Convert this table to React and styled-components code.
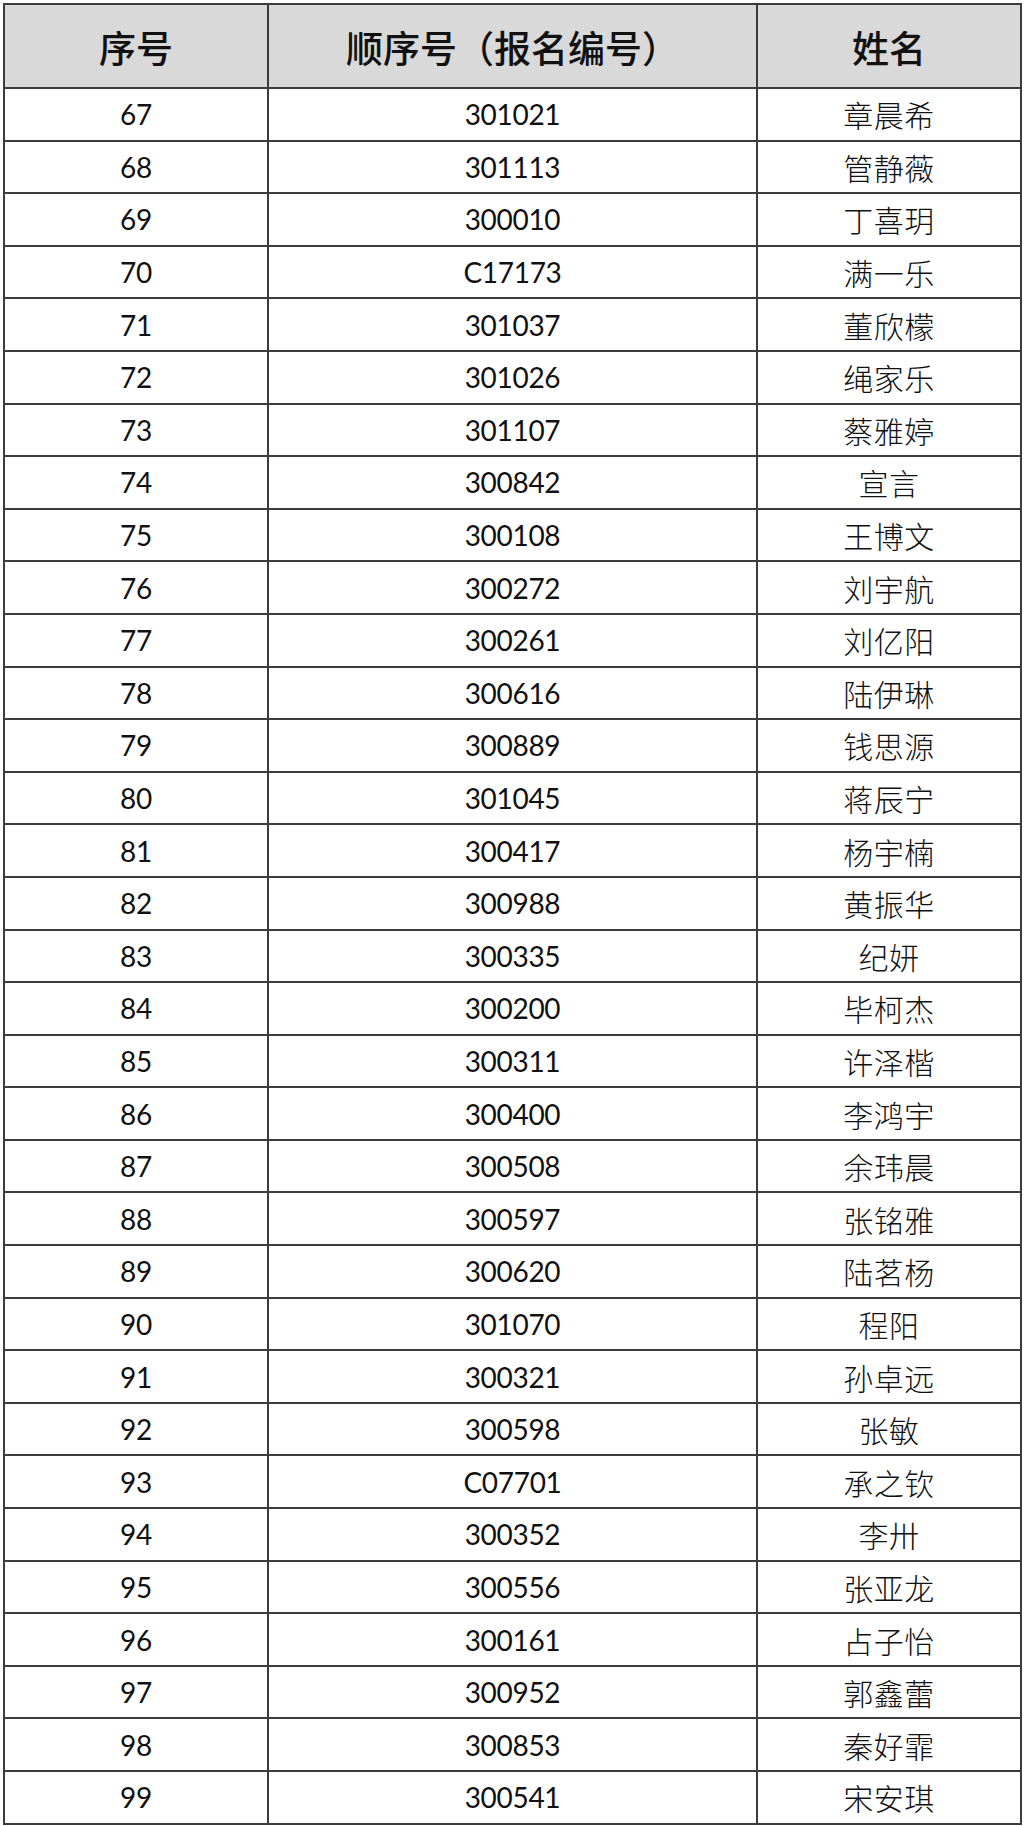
import React from "react";
import styled, { createGlobalStyle } from "styled-components";

const Global = createGlobalStyle`
  html, body { margin: 0; padding: 0; background: #ffffff; }
  body { font-family: "Noto Sans CJK SC", sans-serif; }
`;

const rows = [
  [67, "301021", "章晨希"],
  [68, "301113", "管静薇"],
  [69, "300010", "丁喜玥"],
  [70, "C17173", "满一乐"],
  [71, "301037", "董欣檬"],
  [72, "301026", "绳家乐"],
  [73, "301107", "蔡雅婷"],
  [74, "300842", "宣言"],
  [75, "300108", "王博文"],
  [76, "300272", "刘宇航"],
  [77, "300261", "刘亿阳"],
  [78, "300616", "陆伊琳"],
  [79, "300889", "钱思源"],
  [80, "301045", "蒋辰宁"],
  [81, "300417", "杨宇楠"],
  [82, "300988", "黄振华"],
  [83, "300335", "纪妍"],
  [84, "300200", "毕柯杰"],
  [85, "300311", "许泽楷"],
  [86, "300400", "李鸿宇"],
  [87, "300508", "余玮晨"],
  [88, "300597", "张铭雅"],
  [89, "300620", "陆茗杨"],
  [90, "301070", "程阳"],
  [91, "300321", "孙卓远"],
  [92, "300598", "张敏"],
  [93, "C07701", "承之钦"],
  [94, "300352", "李卅"],
  [95, "300556", "张亚龙"],
  [96, "300161", "占子怡"],
  [97, "300952", "郭鑫蕾"],
  [98, "300853", "秦好霏"],
  [99, "300541", "宋安琪"],
];

const Page = styled.div`
  padding: 3px 0 0 3px;
`;

const Table = styled.div`
  display: grid;
  grid-template-columns: 262px 487px 262px;
  grid-template-rows: 82px;
  grid-auto-rows: 50.6px;
  gap: 2px;
  padding: 2px;
  width: max-content;
  background: #3c3c3c;
`;

const HeadCell = styled.div`
  background: #d9d9d9;
  display: flex;
  align-items: center;
  justify-content: center;
  font-family: "Noto Sans CJK SC", sans-serif;
  font-size: 37px;
  font-weight: 500;
  color: #111;
  padding-top: 2px;
`;

const Cell = styled.div`
  background: #ffffff;
  display: flex;
  align-items: center;
  justify-content: center;
  color: #111;
  font-family: ${(p) =>
    p.$cjk ? `"Noto Sans CJK SC", sans-serif` : `Lato, "Noto Sans", sans-serif`};
  font-size: ${(p) => (p.$cjk ? "30px" : "28px")};
  font-weight: ${(p) => (p.$cjk ? 300 : 400)};
  letter-spacing: ${(p) => (p.$cjk ? "0.5px" : "-0.3px")};
`;

export default function App() {
  return (
    <>
      <Global />
      <Page>
        <Table>
          <HeadCell>序号</HeadCell>
          <HeadCell>顺序号（报名编号）</HeadCell>
          <HeadCell>姓名</HeadCell>
          {rows.map(([n, code, name]) => (
            <React.Fragment key={n}>
              <Cell>{n}</Cell>
              <Cell>{code}</Cell>
              <Cell $cjk>{name}</Cell>
            </React.Fragment>
          ))}
        </Table>
      </Page>
    </>
  );
}
